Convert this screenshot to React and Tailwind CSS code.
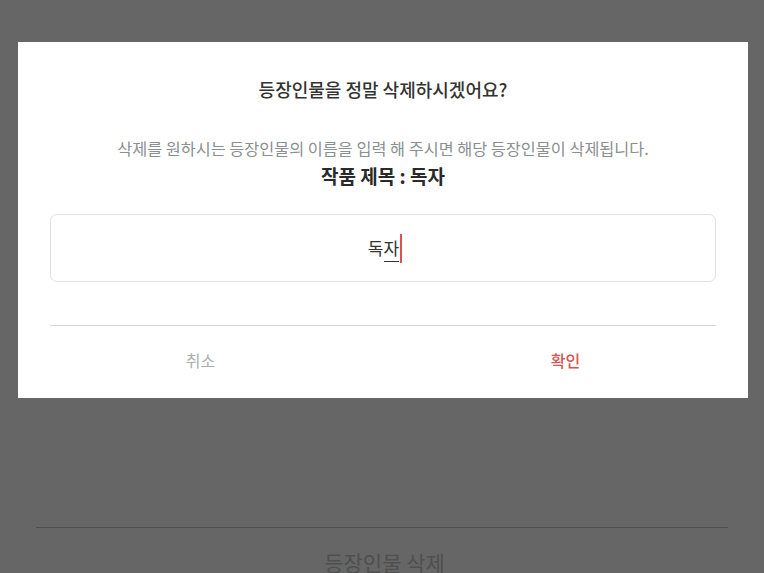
export default function App() {
  const font = { fontFamily: '"Noto Sans CJK KR", "Noto Sans", sans-serif' };
  return (
    <div className="relative h-[573px] w-[764px] overflow-hidden bg-[#666666]" style={font}>
      {/* underlying page */}
      <div className="pt-[527px]">
        <div className="mx-[36px] h-px bg-[#4e4e4e]" />
        <div className="mt-[20px] pl-[5px] text-center text-[21px] leading-[28px] text-[#4f4f4f]">등장인물 삭제</div>
      </div>

      {/* dialog */}
      <div className="absolute left-[18px] top-[42px] flex h-[356px] w-[730px] flex-col bg-white px-[32px]">
        <div className="pt-[34px] text-center text-[18px] leading-[26px] font-medium text-[#333333]">
          등장인물을 정말 삭제하시겠어요?
        </div>
        <div className="mt-[35px] text-center text-[16.3px] leading-[22px] text-[#8a8f91]">
          삭제를 원하시는 등장인물의 이름을 입력 해 주시면 해당 등장인물이 삭제됩니다.
        </div>
        <div className="mt-[5px] text-center text-[19px] leading-[24px] font-semibold text-[#2a2a2a]">
          작품 제목 : 독자
        </div>
        <div className="mt-[26px] flex h-[68px] items-center justify-center rounded-[7px] border border-[#dfe2e3]">
          <div className="flex items-center pl-[4px] text-[17px] leading-[28px] text-[#333333]">
            <span>독</span>
            <span className="border-b-[1.5px] border-[#333333] leading-[26px]">자</span>
            <span className="ml-[1px] h-[29px] w-[2px] bg-[#d9534f]" />
          </div>
        </div>
        <div className="mt-[43px] h-px bg-[#d4d8d9]" />
        <div className="-mx-[32px] flex h-[68px] items-center">
          <div className="flex-1 text-center text-[16px] text-[#a9aeb0]">취소</div>
          <div className="flex-1 text-center text-[16px] font-medium text-[#d9534f]">확인</div>
        </div>
      </div>
    </div>
  );
}
